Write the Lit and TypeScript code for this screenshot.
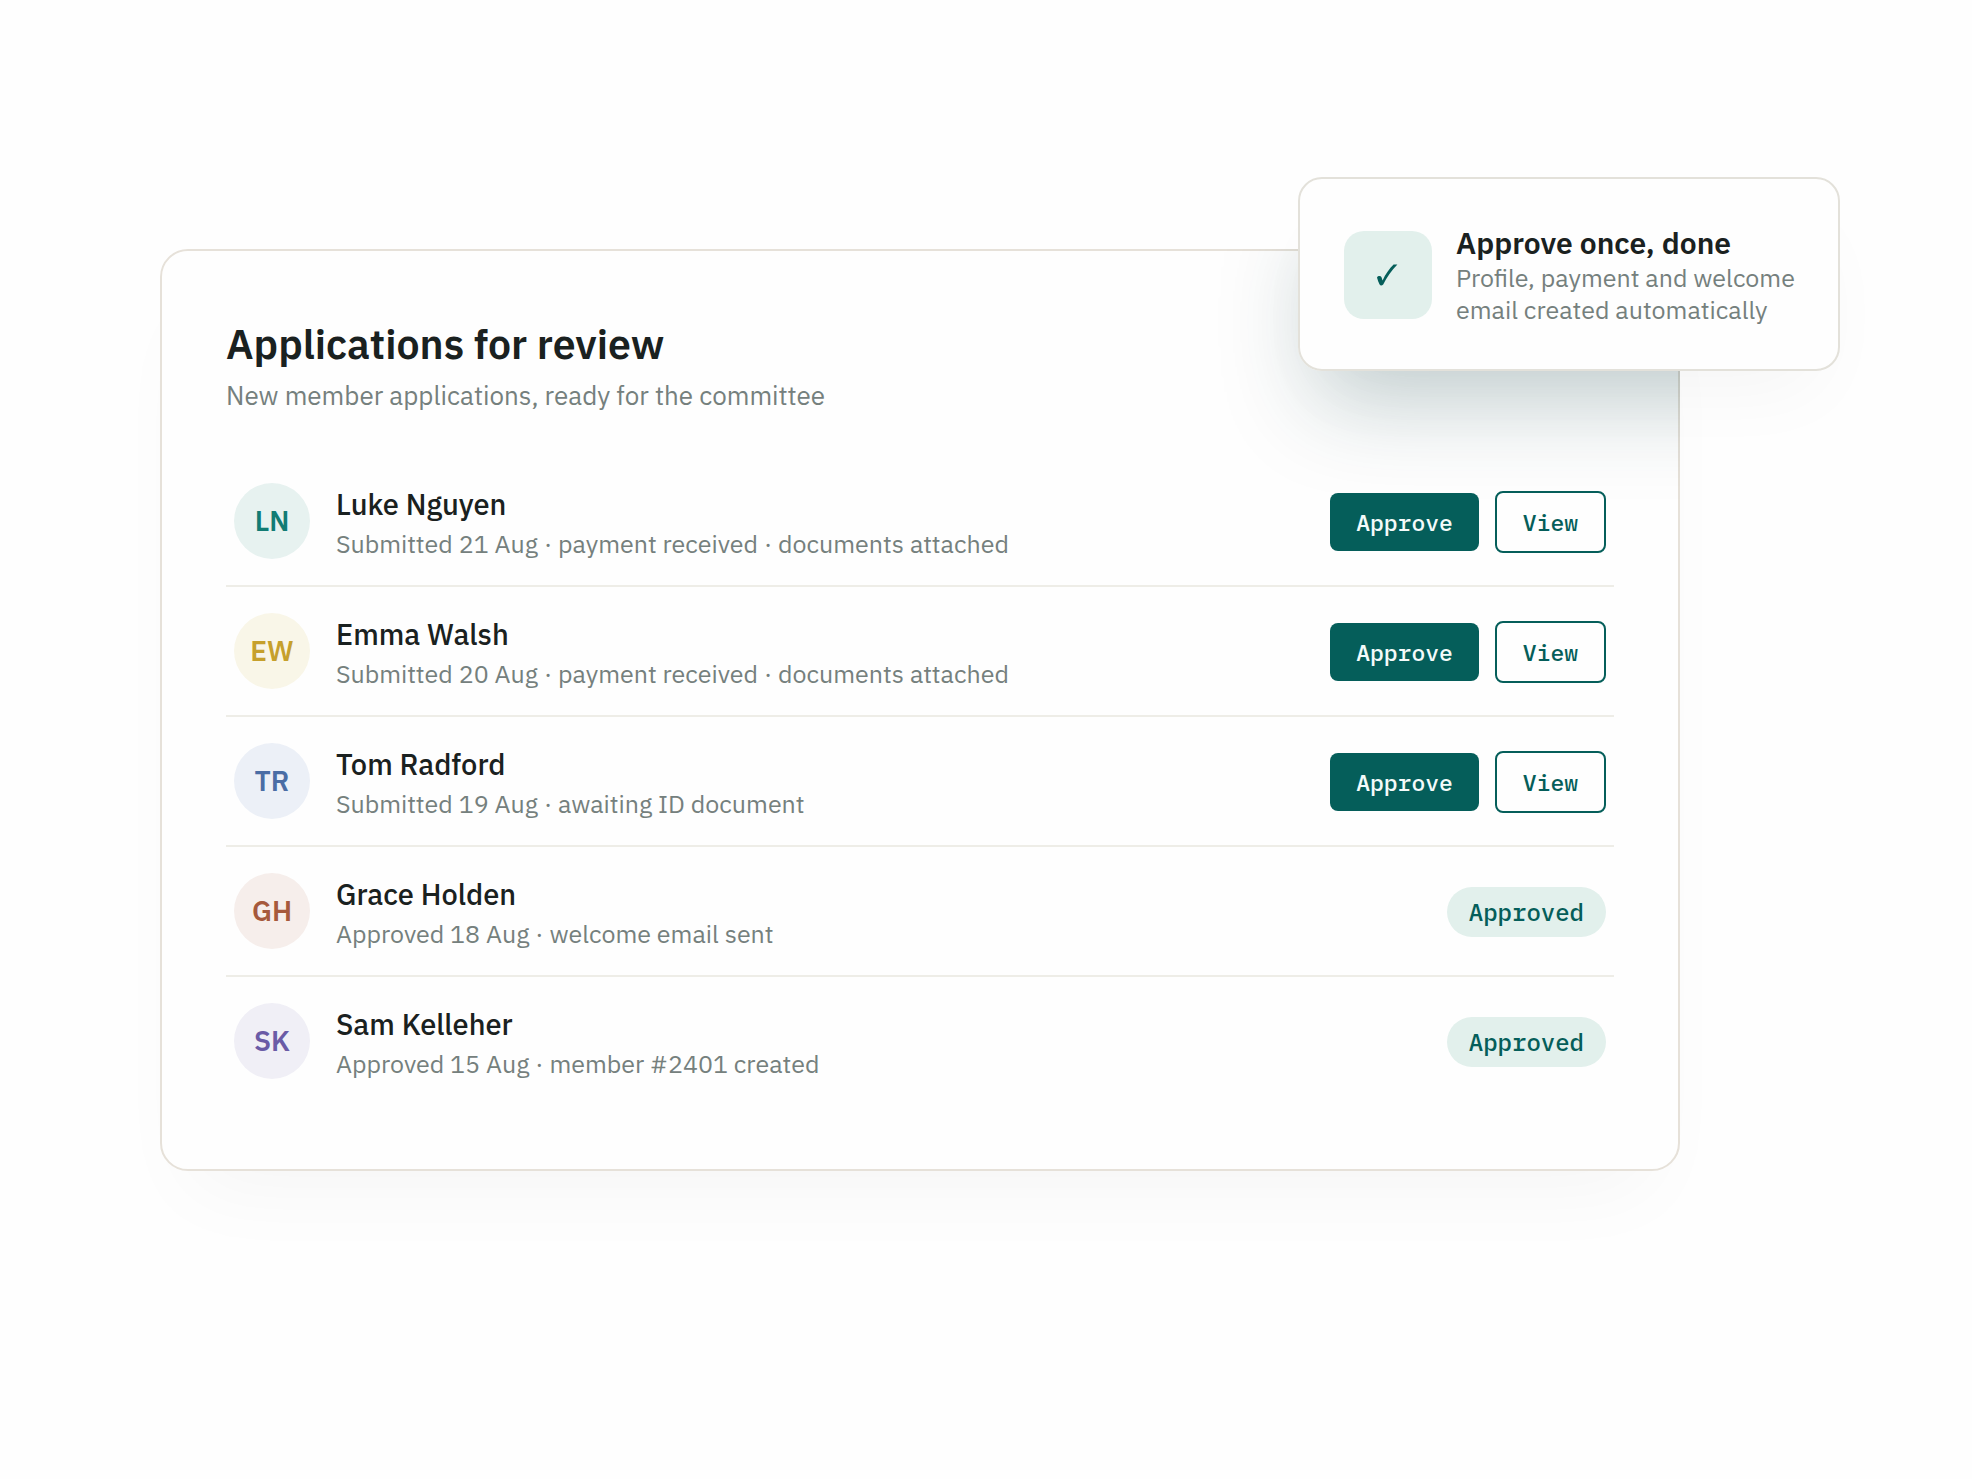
import { LitElement, html, css } from "lit";
import { customElement } from "lit/decorators.js";

interface Application {
  initials: string;
  tone: string;
  name: string;
  detail: string;
  approved: boolean;
}

const applications: Application[] = [
  { initials: "LN", tone: "teal", name: "Luke Nguyen", detail: "Submitted 21 Aug · payment received · documents attached", approved: false },
  { initials: "EW", tone: "gold", name: "Emma Walsh", detail: "Submitted 20 Aug · payment received · documents attached", approved: false },
  { initials: "TR", tone: "blue", name: "Tom Radford", detail: "Submitted 19 Aug · awaiting ID document", approved: false },
  { initials: "GH", tone: "rust", name: "Grace Holden", detail: "Approved 18 Aug · welcome email sent", approved: true },
  { initials: "SK", tone: "violet", name: "Sam Kelleher", detail: "Approved 15 Aug · member #2401 created", approved: true },
];

@customElement("app-root")
export class AppRoot extends LitElement {
  static styles = css`
    :host {
      display: block;
      box-sizing: border-box;
      min-height: 100vh;
      padding: 249px 292px 120px 160px;
      background: #fefefe;
      color: #1a2120;
      font-family: "IBM Plex Sans", "Noto Sans", sans-serif;
    }
    * {
      box-sizing: border-box;
    }
    .card {
      position: relative;
      padding: 64px;
      border: 2px solid #e6e1d9;
      border-radius: 28px;
      background: #fefefe;
      box-shadow: 0 48px 80px -32px rgba(20, 30, 30, 0.04);
    }
    .title {
      margin: 0;
      font-size: 41px;
      font-weight: 600;
      line-height: 58px;
    }
    .subtitle {
      margin: 0 0 40px;
      color: #75807d;
      font-size: 26px;
      line-height: 44px;
    }
    .list {
      position: relative;
      margin: 0;
      padding: 0;
      list-style: none;
    }
    .row {
      display: flex;
      align-items: center;
      gap: 26px;
      padding: 24px 8px;
      border-bottom: 2px solid #eeede7;
    }
    .row:last-child {
      border-bottom: none;
    }
    .avatar {
      display: grid;
      place-items: center;
      flex: none;
      width: 76px;
      height: 76px;
      padding-bottom: 2px;
      border-radius: 50%;
      font-size: 28px;
      font-weight: 600;
    }
    .teal { background: #e7f2f0; color: #127c74; }
    .gold { background: #f9f6e8; color: #c6a02c; }
    .blue { background: #ecf0f7; color: #4a6da5; }
    .rust { background: #f6eeeb; color: #a6593c; }
    .violet { background: #f0eff6; color: #6a5ba6; }
    .person {
      flex: 1;
      min-width: 0;
    }
    .name {
      margin: 0;
      font-size: 29px;
      font-weight: 500;
      line-height: 46px;
    }
    .detail {
      margin: 0;
      color: #75807d;
      font-size: 25px;
      line-height: 34px;
    }
    .actions {
      display: flex;
      align-items: center;
      gap: 16px;
      margin-top: 2px;
    }
    .button,
    .pill {
      font-family: "IBM Plex Mono", "Liberation Mono", monospace;
      font-weight: 500;
      line-height: 26px;
    }
    .button {
      margin: 0;
      padding: 16px 26px;
      border: none;
      border-radius: 8px;
      background: #055e5a;
      color: #f4fbfa;
      font-size: 23px;
      cursor: pointer;
    }
    .button.outline {
      border: 2px solid #055e5a;
      background: #fefefe;
      color: #055e5a;
    }
    .pill {
      margin-top: 2px;
      padding: 12px 22px;
      border-radius: 25px;
      background: #e2f0ec;
      color: #055e5a;
      font-size: 24px;
    }
    .shade {
      position: absolute;
      inset: -2px;
      overflow: hidden;
      border-radius: 28px;
      pointer-events: none;
    }
    .cast {
      position: absolute;
      top: -72px;
      right: -160px;
      width: 542px;
      height: 194px;
      border-radius: 24px;
      box-shadow: 0 48px 96px -16px rgba(5, 60, 62, 0.22);
    }
    .callout {
      position: absolute;
      top: -74px;
      right: -162px;
      display: flex;
      align-items: center;
      gap: 24px;
      width: 542px;
      padding: 45px 44px 43px;
      border: 2px solid #e3e1da;
      border-radius: 24px;
      background: #fefefe;
      box-shadow: 0 40px 80px -24px rgba(20, 30, 30, 0.04);
      white-space: nowrap;
    }
    .tick {
      display: grid;
      place-items: center;
      flex: none;
      width: 88px;
      height: 88px;
      border-radius: 20px;
      background: #e2f0ec;
      color: #055e5a;
    }
    .callout-title {
      margin: 0;
      font-size: 30px;
      font-weight: 600;
      line-height: 38px;
    }
    .callout-text {
      margin: 0;
      color: #75807d;
      font-size: 25px;
      line-height: 32px;
    }
  `;

  private renderRow(a: Application) {
    return html`
      <li class="row">
        <span class="avatar ${a.tone}">${a.initials}</span>
        <div class="person">
          <p class="name">${a.name}</p>
          <p class="detail">${a.detail}</p>
        </div>
        ${a.approved
          ? html`<span class="pill">Approved</span>`
          : html`<div class="actions">
              <button class="button" type="button">Approve</button>
              <button class="button outline" type="button">View</button>
            </div>`}
      </li>
    `;
  }

  render() {
    return html`
      <section class="card">
        <div class="shade"><div class="cast"></div></div>
        <h1 class="title">Applications for review</h1>
        <p class="subtitle">New member applications, ready for the committee</p>
        <ul class="list">
          ${applications.map((a) => this.renderRow(a))}
        </ul>
        <aside class="callout">
          <span class="tick">
            <svg width="22" height="24" viewBox="0 0 22 24" fill="currentColor" aria-hidden="true">
              <path d="M0 14.4C.8 12.8 3.6 12.4 4.4 14L5.6 17.4C8.4 11.4 12.4 5.6 16.6 1.6H20.4C14.8 7.4 9.6 14.6 6.2 21.4C5 22.8 3.4 22.9 2.6 21.6C1.6 19.4 .6 16.8 0 14.4Z" />
            </svg>
          </span>
          <div>
            <h2 class="callout-title">Approve once, done</h2>
            <p class="callout-text">Profile, payment and welcome<br />email created automatically</p>
          </div>
        </aside>
      </section>
    `;
  }
}
